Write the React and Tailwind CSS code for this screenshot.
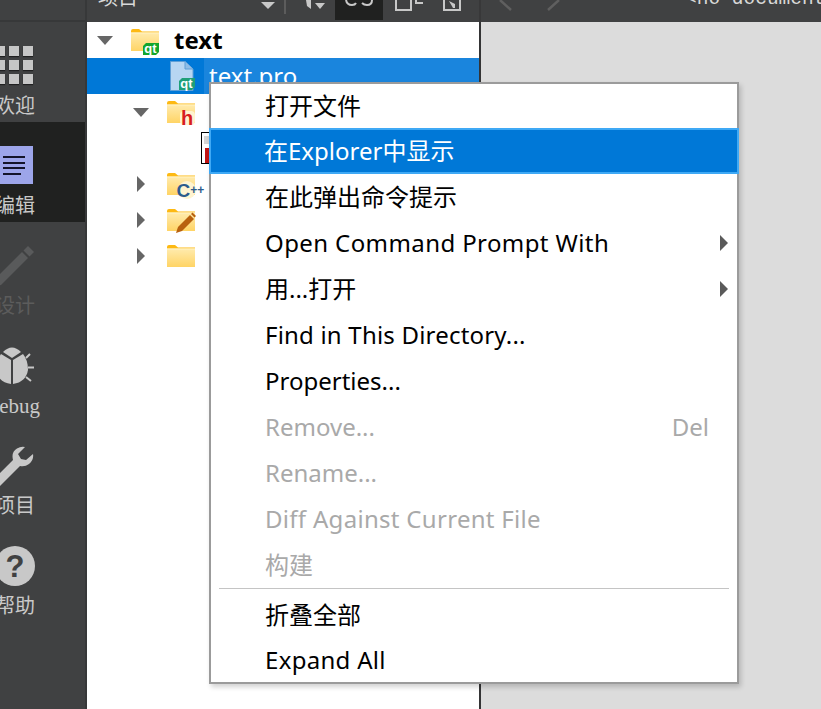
import React from "react";

const SERIF = "font-['Liberation_Serif','Noto_Sans_CJK_SC',serif]";

function Folder({ children }) {
  return (
    <svg width="30" height="28" viewBox="0 0 30 28" className="shrink-0 self-start mt-[6px] overflow-visible">
      <defs>
        <linearGradient id="fg" x1="0" y1="0" x2="0" y2="1">
          <stop offset="0" stopColor="#ffebae" />
          <stop offset="1" stopColor="#ffd465" />
        </linearGradient>
      </defs>
      <path d="M0 2 Q0 0 2 0 H8 L11 2.5 H28 V22 H0 Z" fill="#fdb913" />
      <rect x="0" y="3.5" width="28" height="18.5" fill="url(#fg)" />
      <rect x="0" y="3.5" width="28" height="1" fill="#fff1c4" />
      {children}
    </svg>
  );
}

const QtBadge = ({ x = 12, y = 14, fill = "#14a52c" }) => (
  <g>
    <path d={`M${x} ${y + 3} L${x + 3} ${y} H${x + 16} V${y + 9} L${x + 13} ${y + 12} H${x} Z`} fill={fill} />
    <text x={x + 1.2} y={y + 10} fontSize="13" fontWeight="700" fill="#fff" fontFamily="Liberation Sans">qt</text>
  </g>
);

function Arrow({ open }) {
  return open ? (
    <svg width="16" height="9" viewBox="0 0 16 9" className="shrink-0"><path d="M0 0 H16 L8 9 Z" fill="#666" /></svg>
  ) : (
    <svg width="8" height="16" viewBox="0 0 8 16" className="shrink-0"><path d="M0 0 V16 L8 8 Z" fill="#666" /></svg>
  );
}

function RailItem({ icon, label, dim, active, labelClass }) {
  return (
    <div className={`h-[100px] shrink-0 w-[85px] overflow-hidden ${active ? "bg-[#202120]" : ""}`}>
      <div className="w-[70px] -ml-5 pt-6 flex flex-col items-center">
        <div className="h-10 flex justify-center">{icon}</div>
        <span className={`mt-2 h-6 leading-6 whitespace-nowrap ${labelClass || "text-[20px] " + SERIF} ${dim ? "text-[#5c5c5c]" : "text-[#c9c9c9]"}`}>
          {label}
        </span>
      </div>
    </div>
  );
}

function Item({ label, shortcut, arrow, disabled, active, h, spacing }) {
  return (
    <div
      className={`${h || "h-[46px]"} flex items-center text-[24px] whitespace-nowrap box-border ${
        active
          ? "bg-[#0078d7] border-2 border-[#3fa9f5] text-white -mx-[2px] pl-[53px] pr-4"
          : disabled
          ? "text-[#a9a9a9] pl-[54px] pr-[28px]"
          : "text-black pl-[54px] pr-[9px]"
      }`}
    >
      <span className={`flex-1 ${spacing || ""}`}>{label}</span>
      {shortcut && <span>{shortcut}</span>}
      {arrow && (
        <svg width="8" height="16" viewBox="0 0 8 16"><path d="M0 0 V16 L8 8 Z" fill="#5a5a5a" /></svg>
      )}
    </div>
  );
}

export default function App() {
  return (
    <div className="relative w-[821px] h-[709px] overflow-hidden bg-[#dcdcdc] flex font-['Noto_Sans','Noto_Sans_CJK_SC',sans-serif]">
      {/* Left mode rail */}
      <aside className="w-[87px] shrink-0 bg-[#404142] border-r-2 border-[#373839] flex flex-col overflow-hidden">
        <div className="h-[22px] shrink-0 border-b-2 border-[#373839]" />
        <RailItem
          label="欢迎"
          icon={
            <div className="grid grid-cols-3 gap-1 -ml-[2px] h-[38px]">
              {Array.from({ length: 9 }).map((_, i) => (
                <div key={i} className="w-[10px] h-[10px] bg-[#c6c6c6] shadow-[0_1px_1px_rgba(0,0,0,0.5)]" />
              ))}
            </div>
          }
        />
        <RailItem
          active
          label="编辑"
          icon={
            <div className="w-9 h-[38px] bg-[#9da5ea] flex flex-col gap-[3.5px] pt-[10px] pl-[6px]">
              <div className="w-[22px] h-[2px] bg-[#14142a]" />
              <div className="w-[22px] h-[2px] bg-[#14142a]" />
              <div className="w-[22px] h-[2px] bg-[#14142a]" />
              <div className="w-[18px] h-[2px] bg-[#14142a]" />
            </div>
          }
        />
        <RailItem
          dim
          label="设计"
          icon={
            <svg width="40" height="40" viewBox="0 0 40 40">
              <path d="M0 33 L27 6 L33 12 L6 39 L-2 40 Z" fill="#595a5b" />
              <path d="M28.5 4.5 L33 0 L39 6 L34.5 10.5 Z" fill="#595a5b" />
            </svg>
          }
        />
        <RailItem
          label="Debug"
          labelClass={`text-[21px] -ml-[6px] ${SERIF}`}
          icon={
            <svg width="40" height="40" viewBox="0 0 40 40" className="-ml-[3px]">
              <path d="M9 6 Q18 -3 27 6 L18 12 Z" fill="#c8c8c8" />
              <path d="M7 8 L17 14 V38 Q4 36 2 24 Q2 14 7 8 Z" fill="#c8c8c8" />
              <path d="M29 8 L19 14 V38 Q32 36 34 24 Q34 14 29 8 Z" fill="#c8c8c8" />
              <path d="M32 12 L36 8 M34 21.5 H40 M32 31 L37 35" stroke="#c8c8c8" strokeWidth="2" />
            </svg>
          }
        />
        <RailItem
          label="项目"
          icon={
            <svg width="40" height="40" viewBox="0 0 40 40">
              <path
                d="M-4 36 L18 14 Q16 6 22 2.5 Q26 0 30 1 L23 8 L26 13 L31 14 L38 8 Q39 14 34 18 Q30 21 25 20 L4 41 Q0 42 -4 36 Z"
                fill="#c8c8c8"
              />
            </svg>
          }
        />
        <RailItem
          label="帮助"
          icon={
            <div className="w-10 h-10 rounded-full bg-[#c8c8c8] flex items-center justify-center text-[#404142] text-[31px] font-bold leading-none font-['Liberation_Sans',sans-serif]">
              ?
            </div>
          }
        />
      </aside>

      <div className="flex-1 flex flex-col min-w-0">
        {/* Top tool bars */}
        <div className="h-[22px] shrink-0 bg-[#404142] flex overflow-hidden">
          <div className="w-[392px] shrink-0 flex items-start relative">
            <span className={`ml-[11px] -mt-[14px] text-[20px] leading-6 text-[#d8d8d8] ${SERIF}`}>项目</span>
            <svg width="14" height="7" viewBox="0 0 14 7" className="ml-[123px] mt-[2px]"><path d="M0 0 H14 L7 7 Z" fill="#c8c8c8" /></svg>
            <div className="ml-[9px] w-[2px] h-[14px] bg-[#5c5c5c]" />
            <svg width="20" height="10" viewBox="0 0 20 10" className="ml-[20px]">
              <path d="M0 0 H5 V9 L1 6 Z" fill="#c8c8c8" />
              <path d="M9 3 H19 L14 9 Z" fill="#c8c8c8" />
            </svg>
            <div className="ml-[9px] w-12 h-5 bg-[#202120] flex justify-center">
              <svg width="30" height="8" viewBox="0 0 30 8">
                <path d="M2 0 Q3 5 8 5 Q11 5 12 3 M18 3 Q20 5 23 5 Q28 5 28 0" stroke="#c8c8c8" strokeWidth="2" fill="none" />
              </svg>
            </div>
            <svg width="28" height="11" viewBox="0 0 28 11" className="ml-3">
              <path d="M1 0 V10 H16 V0 M21 0 V3 H28" stroke="#c8c8c8" strokeWidth="2" fill="none" />
            </svg>
            <svg width="18" height="11" viewBox="0 0 18 11" className="ml-5">
              <path d="M1 0 V10 H17 V0" stroke="#c8c8c8" strokeWidth="2" fill="none" />
              <path d="M6 1 L12 4 V8 H10 Z" fill="#c8c8c8" />
            </svg>
          </div>
          <div className="w-[2px] shrink-0 bg-[#383839]" />
          <div className="flex-1 flex items-start min-w-0">
            <svg width="14" height="11" viewBox="0 0 14 11" className="ml-[18px] shrink-0"><path d="M1 0 L12 10" stroke="#5f5f5f" strokeWidth="2.5" /></svg>
            <svg width="14" height="11" viewBox="0 0 14 11" className="ml-[34px] shrink-0"><path d="M12 0 L1 10" stroke="#5f5f5f" strokeWidth="2.5" /></svg>
            <span className="ml-[124px] -mt-[13px] shrink-0 text-[19.5px] leading-6 whitespace-nowrap text-[#d8d8d8] font-['Liberation_Mono',monospace]">&lt;no document&gt;</span>
          </div>
        </div>

        <div className="flex-1 flex min-h-0">
          {/* Project tree */}
          <div className="w-[392px] shrink-0 bg-white flex flex-col text-[24px]">
            <div className="h-9 flex items-center pl-[10px]">
              <Arrow open />
              <div className="ml-[18px] flex"><Folder><QtBadge x={12} y={14} /></Folder></div>
              <span className="ml-[13px] -mt-px font-bold text-black leading-none">text</span>
            </div>
            <div className="h-9 flex items-center pl-[83px] bg-[#0078d7]">
              <svg width="28" height="30" viewBox="0 0 28 30" className="shrink-0">
                <path d="M0.5 0.5 H15 L23 8 V29.5 H0.5 Z" fill="#b7d6f2" stroke="#5f9fd6" />
                <path d="M15 0.5 V8 H23" fill="#8fbde6" stroke="#5f9fd6" />
                <QtBadge x={9} y={17} fill="#1f9f78" />
              </svg>
              <div className="ml-[6px] flex-1 h-full bg-[#1a85dd] pl-[5px] flex items-center text-white leading-none">text.pro</div>
            </div>
            <div className="h-9 flex items-center pl-[46px]">
              <Arrow open />
              <div className="ml-[18px] flex">
                <Folder>
                  <rect x="13" y="10" width="15" height="14" fill="#fff4d0" rx="4" />
                  <text x="14" y="24" fontSize="20" fontWeight="700" fill="#d81e1e" fontFamily="Liberation Sans">h</text>
                </Folder>
              </div>
            </div>
            <div className="h-9 flex items-center pl-[114px]">
              <svg width="30" height="32" viewBox="0 0 30 32">
                <rect x="0.5" y="0.5" width="29" height="31" fill="#fff" stroke="#000" />
                <rect x="3" y="4" width="6" height="8" fill="#d5d5d5" />
                <rect x="4" y="16" width="22" height="15" fill="#c01414" />
              </svg>
            </div>
            <div className="h-9 flex items-center pl-[50px]">
              <Arrow />
              <div className="ml-[22px] flex">
                <Folder>
                  <circle cx="20" cy="17" r="9" fill="#fff4d0" />
                  <text x="9.5" y="24" fontSize="19" fontWeight="700" fill="#2d5c8c" fontFamily="Liberation Sans">
                    C<tspan fontSize="12" dy="-3">++</tspan>
                  </text>
                </Folder>
              </div>
            </div>
            <div className="h-9 flex items-center pl-[50px]">
              <Arrow />
              <div className="ml-[22px] flex">
                <Folder>
                  <path d="M9 24 L11 18 L23 6 L27 10 L15 22 Z" fill="#b8610f" />
                  <path d="M24 5 L25.5 3.5 L29 7 L27.5 8.5 Z" fill="#b8610f" />
                </Folder>
              </div>
            </div>
            <div className="h-9 flex items-center pl-[50px]">
              <Arrow />
              <div className="ml-[22px] flex"><Folder /></div>
            </div>
          </div>
          <div className="w-[2px] shrink-0 bg-[#343435]" />
          <div className="flex-1 bg-[#dcdcdc]" />
        </div>
      </div>

      {/* Context menu */}
      <div className="absolute left-[209px] top-[82px] w-[530px] bg-white border-2 border-[#9b9b9b] shadow-[2px_3px_5px_rgba(0,0,0,0.18)] flex flex-col">
        <Item label="打开文件" h="h-[44px]" />
        <Item label="在Explorer中显示" active />
        <Item label="在此弹出命令提示" />
        <Item label="Open Command Prompt With" arrow spacing="tracking-[0.4px]" />
        <Item label="用...打开" arrow />
        <Item label="Find in This Directory..." spacing="tracking-[0.2px]" />
        <Item label="Properties..." />
        <Item label="Remove..." shortcut="Del" disabled />
        <Item label="Rename..." disabled />
        <Item label="Diff Against Current File" disabled spacing="tracking-[0.3px]" />
        <Item label="构建" disabled />
        <div className="h-1 shrink-0 px-2"><div className="h-px bg-[#c4c4c4]" /></div>
        <Item label="折叠全部" />
        <Item label="Expand All" h="h-[44px]" spacing="tracking-[0.3px]" />
      </div>
    </div>
  );
}
